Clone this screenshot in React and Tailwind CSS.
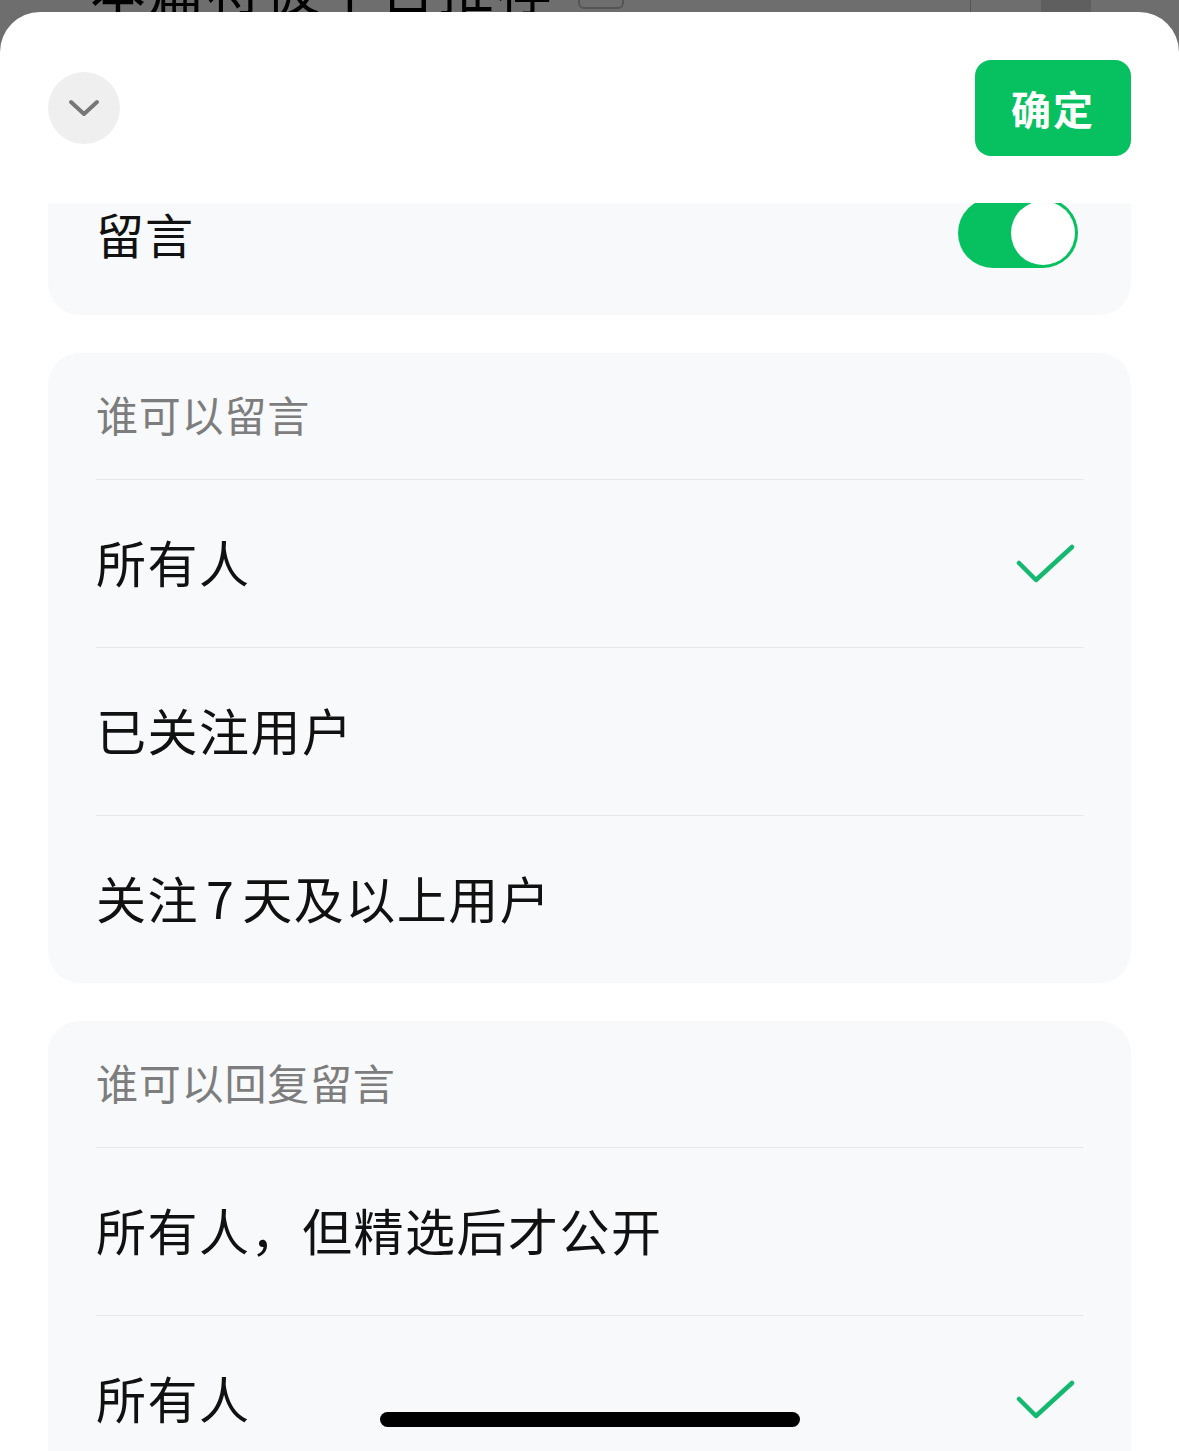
const font = { fontFamily: '"Noto Sans CJK SC", "Noto Sans", sans-serif' };

function Check() {
  return (
    <svg width="60" height="44" viewBox="0 0 60 44" fill="none">
      <path d="M4 21 L21 38 L57 5" stroke="#15b86f" strokeWidth="4.5" strokeLinecap="round" strokeLinejoin="round" />
    </svg>
  );
}

function Row({ label, checked }) {
  return (
    <div className="h-[168px] flex items-center justify-between border-t border-[#e6e7ea]">
      <span className="text-[50px] leading-none tracking-[1.5px] text-[#111] pb-[6px]">{label}</span>
      {checked && (
        <div className="mr-[8px]">
          <Check />
        </div>
      )}
    </div>
  );
}

function Section({ title, items }) {
  return (
    <div className="bg-[#f8f9fb] rounded-[32px] px-12">
      <div className="h-[126px] flex items-center">
        <span className="text-[42px] leading-none tracking-[0.8px] text-[#7d7d7d] pb-[4px]">{title}</span>
      </div>
      {items.map((it, i) => (
        <Row key={i} label={it.label} checked={it.checked} />
      ))}
    </div>
  );
}

export default function App() {
  return (
    <div className="relative h-[1451px] w-[1179px] bg-[#6e6e6e] overflow-hidden flex flex-col" style={font}>
      {/* page behind the sheet */}
      <div className="h-3 shrink-0 overflow-hidden">
        <div className="-mt-[44px] flex items-center h-[60px] px-[90px]">
          <span className="text-[56px] leading-none text-black tracking-[2px]">本篇将被平台推荐</span>
          <span className="ml-6 w-[46px] h-[46px] border-2 border-[#555] rounded-md" />
          <span className="ml-auto w-px h-[60px] bg-[#555] mr-[70px]" />
          <span className="w-[50px] h-[60px] bg-[#5f5f5f] mr-[-2px]" />
        </div>
      </div>

      {/* sheet */}
      <div className="flex-1 bg-white rounded-t-[40px] flex flex-col overflow-hidden">
        <div className="h-[191px] shrink-0 flex items-center justify-between px-12">
          <button className="w-[72px] h-[72px] rounded-full bg-[#efefef] flex items-center justify-center">
            <svg width="32" height="20" viewBox="0 0 32 20" fill="none">
              <path d="M3 4 L16 16 L29 4" stroke="#777" strokeWidth="4" strokeLinecap="round" strokeLinejoin="round" />
            </svg>
          </button>
          <button className="w-[156px] h-[96px] rounded-[16px] bg-[#07c160] text-white text-[40px] font-bold tracking-[2px] flex items-center justify-center">
            确定
          </button>
        </div>

        <div className="flex-1 overflow-hidden">
          <div className="-mt-[54px] flex flex-col gap-[38px] px-12">
            <div className="bg-[#f8f9fb] rounded-[32px] px-12 h-[166px] flex items-center justify-between">
              <span className="text-[48px] leading-none tracking-[1px] text-[#111] pt-[2px]">留言</span>
              <div className="w-[120px] h-[70px] rounded-full bg-[#07c160] p-[3px] flex justify-end mr-[5px] mt-[2px]">
                <div className="w-[64px] h-[64px] rounded-full bg-white" />
              </div>
            </div>

            <Section
              title="谁可以留言"
              items={[
                { label: "所有人", checked: true },
                { label: "已关注用户" },
                { label: <>关注<span className="mx-[7px]">7</span>天及以上用户</> },
              ]}
            />

            <Section
              title="谁可以回复留言"
              items={[
                { label: "所有人，但精选后才公开" },
                { label: "所有人", checked: true },
                { label: "已关注用户" },
              ]}
            />
          </div>
        </div>
      </div>

      {/* home indicator */}
      <div className="absolute left-[380px] top-[1412px] w-[420px] h-[15px] rounded-full bg-black" />
    </div>
  );
}
